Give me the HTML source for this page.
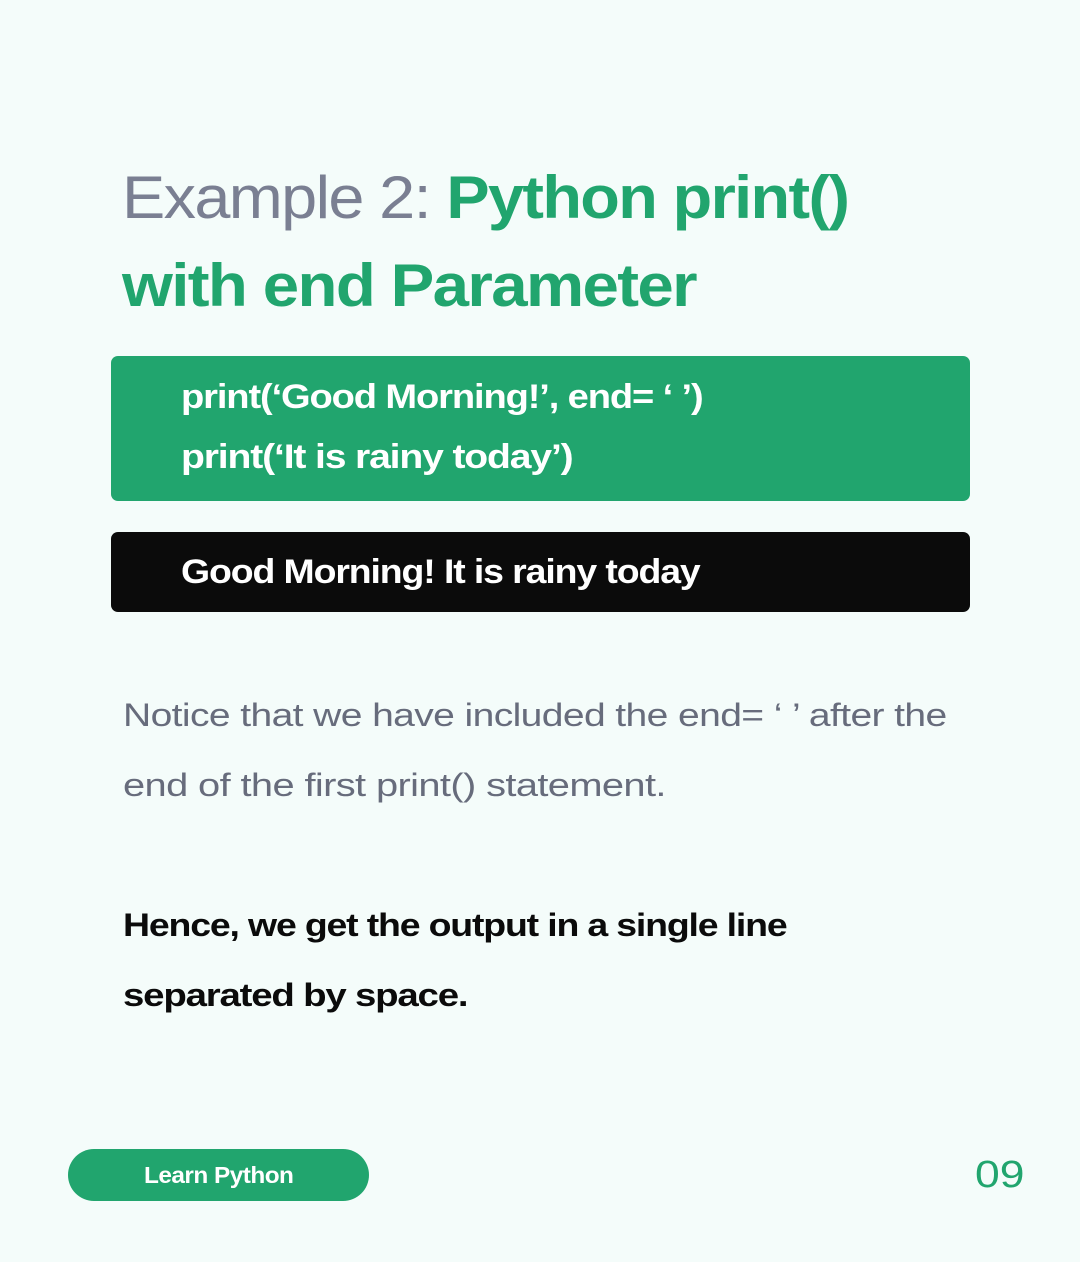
<!DOCTYPE html>
<html><head><style>
body{margin:0;width:1080px;height:1262px;background:#f4fcfa;font-family:"Liberation Sans",sans-serif;position:relative;overflow:hidden}
.a{position:absolute;white-space:nowrap;transform-origin:0 0}
.t{font-size:60px;letter-spacing:-1.5px;line-height:1}
.g{color:#21a56e;font-weight:bold}
.gr{color:#7a7f92}
.box{position:absolute;left:111px;width:859px;border-radius:7px}
.code{color:#fff;font-weight:bold;font-size:34px;letter-spacing:-1px}
.p{font-size:32px;color:#676c7c;letter-spacing:-0.5px}
.b{font-size:32px;font-weight:bold;color:#0b0b0b;letter-spacing:-1px}
</style></head><body>
<div class="a t" style="left:122px;top:168px;transform:scaleX(1.08)"><span class="gr">Example 2: </span><span class="g">Python print()</span></div>
<div class="a t g" style="left:122px;top:256px;transform:scaleX(1.09)">with end Parameter</div>
<div class="box" style="top:356px;height:145px;background:#21a56e"></div>
<div class="a code" style="left:181px;top:378px;transform:scaleX(1.12)">print(‘Good Morning!’, end= ‘ ’)</div>
<div class="a code" style="left:181px;top:438px;transform:scaleX(1.15)">print(‘It is rainy today’)</div>
<div class="box" style="top:532px;height:80px;background:#0b0b0b"></div>
<div class="a code" style="left:181px;top:553px;transform:scaleX(1.1)">Good Morning! It is rainy today</div>
<div class="a p" style="left:123px;top:697px;transform:scaleX(1.22)">Notice that we have included the end= ‘ ’ after the</div>
<div class="a p" style="left:123px;top:767px;transform:scaleX(1.245)">end of the first print() statement.</div>
<div class="a b" style="left:123px;top:907px;transform:scaleX(1.17)">Hence, we get the output in a single line</div>
<div class="a b" style="left:123px;top:977px;transform:scaleX(1.2)">separated by space.</div>
<div class="a" style="left:68px;top:1149px;width:301px;height:52px;border-radius:26px;background:#21a56e"></div>
<div class="a" style="left:144px;top:1162px;color:#fff;font-weight:bold;font-size:23px;letter-spacing:-0.5px;transform:scaleX(1.06)">Learn Python</div>
<div class="a" style="left:975px;top:1154px;color:#21a56e;font-size:38px;transform:scaleX(1.17)">09</div>
</body></html>
